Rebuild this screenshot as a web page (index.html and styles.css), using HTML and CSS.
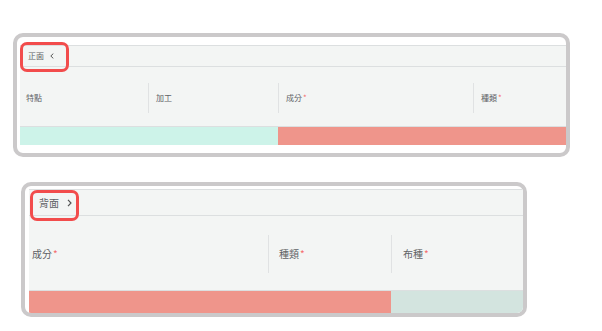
FILE: index.html
```html
<!DOCTYPE html>
<html lang="zh-Hant">
<head>
<meta charset="UTF-8" />
<meta name="viewport" content="width=device-width, initial-scale=1" />
<title>正面 / 背面</title>
<link rel="stylesheet" href="styles.css">
</head>
<body>
<div class="shot shotFront">
    <div class="tabla">
        <div class="cabeca">
            <span class="rotulo">正面</span>
            <svg class="seta" width="4" height="6" viewBox="0 0 4 6"><polyline points="3.3,0.6 0.8,3 3.3,5.4" fill="none" stroke="#555" stroke-width="1"/></svg>
        </div>
        <div class="linha">
            <div class="celula c1">特點</div>
            <div class="celula c2">加工</div>
            <div class="celula c3">成分<i>*</i></div>
            <div class="celula c4">種類<i>*</i></div>
        </div>
        <div class="barra">
            <div class="verde" style="width: 258px"></div>
            <div class="rosa"></div>
        </div>
    </div>
    <div class="marca"></div>
</div>

<div class="shot shotBack">
    <div class="tabla">
        <div class="cabeca">
            <span class="rotulo">背面</span>
            <svg class="seta" width="5" height="8" viewBox="0 0 5 8"><polyline points="1,0.8 4,4 1,7.2" fill="none" stroke="#555" stroke-width="1.2"/></svg>
        </div>
        <div class="linha">
            <div class="celula c1">成分<i>*</i></div>
            <div class="celula c2">種類<i>*</i></div>
            <div class="celula c3">布種<i>*</i></div>
        </div>
        <div class="barra">
            <div class="rosa" style="width: 362px; flex: none"></div>
            <div class="cinza"></div>
        </div>
    </div>
    <div class="marca"></div>
</div>
</body>
</html>
```

FILE: styles.css
```css
body{
    margin: 0;
    padding: 0;
    background-color: white;
    font-family: "Noto Sans CJK TC", "Noto Sans", sans-serif;
    color: #606266;
}
.shot{
    position: relative;
    box-sizing: border-box;
    border: 4px solid #cbc9ca;
    border-radius: 10px;
    background-color: white;
    overflow: hidden;
}
.tabla{
    background-color: #f3f5f4;
    border-top: 1px solid #dcdfe0;
}
.cabeca{
    display: flex;
    align-items: center;
    border-bottom: 1px solid #dcdfe0;
}
.rotulo{
    line-height: 1;
}
.linha{
    display: flex;
    align-items: center;
}
.celula{
    display: flex;
    align-items: center;
    box-sizing: border-box;
    border-left: 1px solid #e0e2e3;
    line-height: 1;
}
.celula.c1{
    border-left: none;
}
.celula i{
    font-style: normal;
    color: #f56c6c;
    margin-left: 1px;
}
.barra{
    display: flex;
    border-top: 1px solid #dcdfe0;
}
.verde{
    background-color: #cdf3e9;
}
.rosa{
    flex: 1;
    background-color: #ef958b;
}
.cinza{
    flex: 1;
    background-color: #d3e4df;
}
.marca{
    position: absolute;
    box-sizing: border-box;
    border: 3px solid #f24c4c;
    border-radius: 7px;
}

/* primeiro print */
.shotFront{
    width: 557px;
    height: 124px;
    margin: 33px 0 0 13px;
    padding: 8px 0 0 3px;
}
.shotFront .cabeca{
    height: 20px;
    padding-left: 8px;
    font-size: 8px;
    gap: 6px;
}
.shotFront .linha{
    height: 59px;
    font-size: 8px;
}
.shotFront .celula{
    height: 30px;
    padding-left: 7px;
    margin-top: 2px;
}
.shotFront .c1{ width: 128px; padding-left: 6px; }
.shotFront .c2{ width: 130px; }
.shotFront .c3{ width: 195px; }
.shotFront .c4{ flex: 1; }
.shotFront .barra{
    height: 18px;
}
.shotFront .marca{
    left: 3px;
    top: 5px;
    width: 49px;
    height: 30px;
}

/* segundo print */
.shotBack{
    width: 506px;
    height: 135px;
    margin: 25px 0 0 21px;
    padding: 3px 0 0 4px;
}
.shotBack .cabeca{
    height: 25px;
    padding-left: 10px;
    font-size: 10px;
    gap: 8px;
}
.shotBack .linha{
    height: 74px;
    font-size: 10px;
}
.shotBack .celula{
    height: 38px;
    padding-left: 10px;
    margin-top: 2px;
}
.shotBack .c1{ width: 239px; padding-left: 3px; }
.shotBack .c2{ width: 123px; }
.shotBack .c3{ flex: 1; padding-left: 11px; }
.shotBack .barra{
    height: 22px;
}
.shotBack .marca{
    left: 5px;
    top: 4px;
    width: 49px;
    height: 31px;
}
```
